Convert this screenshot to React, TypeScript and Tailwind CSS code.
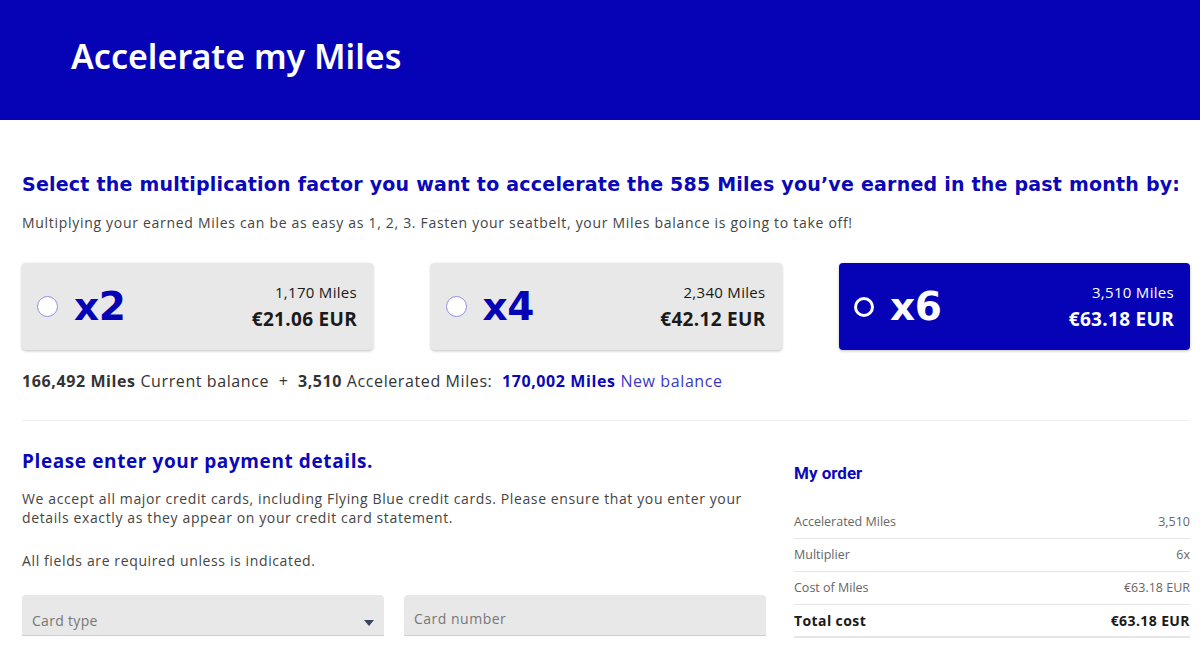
import React from "react";

function Radio({ selected }: { selected?: boolean }) {
  return selected ? (
    <span className="block w-[20px] h-[20px] rounded-full border-[3px] border-white shrink-0" />
  ) : (
    <span className="block w-[21px] h-[21px] rounded-full bg-white border border-[#8f8fe6] shrink-0" />
  );
}

function Card({ f, miles, price, selected }: { f: string; miles: string; price: string; selected?: boolean }) {
  return (
    <div
      className={
        "w-[351px] h-[87px] rounded-[4px] flex items-center pl-[15px] pr-[16px] shadow-[0_1px_3px_rgba(0,0,0,0.25)] " +
        (selected ? "bg-[#0603b7] text-white" : "bg-[#e8e8e8] text-[#1a1a1a]")
      }
    >
      <Radio selected={selected} />
      <span
        className={"ml-[16px] text-[39px] font-bold leading-none tracking-[-0.5px] " + (selected ? "text-white" : "text-[#0603b7]")}
        style={{ fontFamily: '"DejaVu Sans", sans-serif' }}
      >
        {f}
      </span>
      <div className="ml-auto flex flex-col items-end" style={{ fontFamily: '"Open Sans", sans-serif' }}>
        <span className="text-[15px] leading-[20px] tracking-[0.3px]">{miles}</span>
        <span className="text-[19px] font-bold leading-[26px] mt-[4px] tracking-[0.3px]">{price}</span>
      </div>
    </div>
  );
}

function Row({ label, value, bold, last }: { label: string; value: string; bold?: boolean; last?: boolean }) {
  return (
    <div
      className={
        "flex justify-between items-center h-[33px] " +
        (last ? "border-b-2 border-[#e6e6e6]" : "border-b border-[#e6e6e6]") +
        (bold ? " text-[14px] font-bold text-[#1a1a1a]" : " text-[12.5px] text-[#666]")
      }
    >
      <span className={bold ? "tracking-[0.4px]" : ""}>{label}</span>
      <span className={bold ? "tracking-[0.4px]" : ""}>{value}</span>
    </div>
  );
}

export default function App() {
  return (
    <div className="w-[1200px] h-[649px] overflow-hidden bg-white" style={{ fontFamily: '"Open Sans", sans-serif' }}>
      <header className="h-[120px] bg-[#0603b7] flex items-center pl-[71px]">
        <h1 className="text-white text-[34px] font-semibold leading-none pb-[8px]" style={{ fontFamily: '"Noto Sans", sans-serif' }}>
          Accelerate my Miles
        </h1>
      </header>

      <main className="pl-[22px] pr-[10px]">
        <h2
          className="mt-[51px] text-[19px] font-bold leading-[26px] text-[#0a08b8] tracking-[0.22px] whitespace-nowrap"
          style={{ fontFamily: '"DejaVu Sans", sans-serif' }}
        >
          Select the multiplication factor you want to accelerate the 585 Miles you’ve earned in the past month by:
        </h2>
        <p className="mt-[16px] text-[14px] leading-[20px] text-[#444] tracking-[0.7px]">
          Multiplying your earned Miles can be as easy as 1, 2, 3. Fasten your seatbelt, your Miles balance is going to take off!
        </p>

        <div className="mt-[30px] flex justify-between">
          <Card f="x2" miles="1,170 Miles" price="€21.06 EUR" />
          <Card f="x4" miles="2,340 Miles" price="€42.12 EUR" />
          <Card f="x6" miles="3,510 Miles" price="€63.18 EUR" selected />
        </div>

        <p className="mt-[20px] text-[16px] leading-[22px] text-[#333] tracking-[0.6px]">
          <b>166,492 Miles</b> Current balance&nbsp; +&nbsp; <b>3,510</b> Accelerated Miles:&nbsp; <b className="text-[#0a08b8]">170,002 Miles</b>{" "}
          <span className="text-[#3b38c4]">New balance</span>
        </p>

        <div className="mt-[28px] border-t border-[#eeeeee]" />

        <div className="flex gap-[28px]">
          <div className="w-[744px]">
            <h3 className="mt-[27px] text-[19px] font-bold leading-[26px] text-[#0a08b8] tracking-[0.6px]">
              Please enter your payment details.
            </h3>
            <p className="mt-[15px] text-[14px] leading-[19px] text-[#444] tracking-[0.62px] w-[740px]">
              We accept all major credit cards, including Flying Blue credit cards. Please ensure that you enter your details exactly as they appear on your credit card statement.
            </p>
            <p className="mt-[24px] text-[14px] leading-[19px] text-[#444] tracking-[0.62px]">
              All fields are required unless is indicated.
            </p>
            <div className="mt-[25px] flex gap-[20px]">
              <div className="w-[362px] h-[41px] bg-[#e8e8e8] rounded-t-[4px] border-b border-[#c9d0dc] flex items-end pl-[10px] pr-[10px] pb-[4px]">
                <span className="text-[14px] text-[#777] tracking-[0.3px]">Card type</span>
                <svg className="ml-auto mb-[5px]" width="10" height="6" viewBox="0 0 10 6">
                  <path d="M0 0 L10 0 L5 6 Z" fill="#3a4660" />
                </svg>
              </div>
              <div className="w-[362px] h-[41px] bg-[#e8e8e8] rounded-t-[4px] border-b border-[#c9d0dc] flex items-end pl-[10px] pb-[6px]">
                <span className="text-[14px] text-[#777] tracking-[0.5px]">Card number</span>
              </div>
            </div>
          </div>

          <div className="flex-1">
            <h3 className="mt-[40px] text-[17px] font-bold leading-[24px] text-[#0a08b8]" style={{ fontFamily: "Roboto, sans-serif" }}>
              My order
            </h3>
            <div className="mt-[21px]">
              <Row label="Accelerated Miles" value="3,510" />
              <Row label="Multiplier" value="6x" />
              <Row label="Cost of Miles" value="€63.18 EUR" />
              <Row label="Total cost" value="€63.18 EUR" bold last />
            </div>
          </div>
        </div>
      </main>
    </div>
  );
}
